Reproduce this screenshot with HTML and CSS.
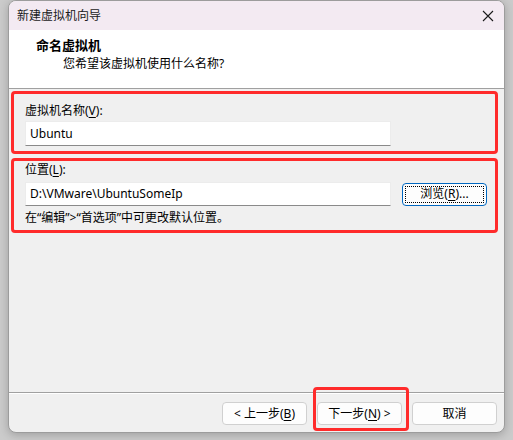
FILE: index.html
```html
<!DOCTYPE html>
<html lang="zh-CN">
<head>
<meta charset="utf-8">
<title>新建虚拟机向导</title>
<link rel="stylesheet" href="styles.css">
</head>
<body>
<div class="win">
  <div class="titlebar">
    <span class="title">新建虚拟机向导</span>
    <svg class="close" width="12" height="12" viewBox="0 0 12 12"><path d="M1 1 L11 11 M11 1 L1 11" stroke="#1a1a1a" stroke-width="1.1" fill="none"/></svg>
  </div>
  <div class="header">
    <div class="h-title">命名虚拟机</div>
    <div class="h-sub">您希望该虚拟机使用什么名称?</div>
  </div>
  <div class="content">
    <div class="box box-name">
      <div class="label">虚拟机名称(<u>V</u>):</div>
      <div class="input">Ubuntu</div>
    </div>
    <div class="box box-loc">
      <div class="label">位置(<u>L</u>):</div>
      <div class="row">
        <div class="input input-loc">D:\VMware\UbuntuSomeIp</div>
        <div class="btn browse"><span class="focus">浏览(<u>R</u>)...</span></div>
      </div>
      <div class="hint">在“编辑”&gt;“首选项”中可更改默认位置。</div>
    </div>
  </div>
  <div class="sep"></div>
  <div class="footer">
    <div class="btn">&lt; 上一步(<u>B</u>)</div>
    <div class="btn">下一步(<u>N</u>) &gt;</div>
    <div class="btn">取消</div>
    <div class="mark"></div>
  </div>
</div>
</body>
</html>
```
FILE: styles.css
```css
* { box-sizing: border-box; }
html, body {
  margin: 0;
  padding: 0;
  background: #cbcbcb;
  width: 513px;
  height: 440px;
  overflow: hidden;
}
body {
  font-family: "Noto Sans", "Noto Sans CJK SC", sans-serif;
  font-size: 12px;
  color: #000;
}
.win {
  position: relative;
  margin-left: 8px;
  width: 497px;
  height: 433px;
  border: 1px solid #9c9c9c;
  border-radius: 8px;
  background: #f0f0f0;
  overflow: hidden;
  box-shadow: 0 2px 10px rgba(0,0,0,0.22);
  display: flex;
  flex-direction: column;
}
.titlebar {
  height: 29px;
  flex: none;
  background: #f3eaf2;
  display: flex;
  align-items: center;
  justify-content: space-between;
  padding: 0 10px 0 8px;
}
.title {
  font-size: 12px;
  line-height: 16px;
  color: #1a1a1a;
  margin-top: 1px;
}
.close { margin-top: 0; }
.header {
  height: 59px;
  flex: none;
  background: #fff;
  border-bottom: 1px solid #a0a0a0;
  padding: 7px 0 0 27px;
}
.h-title {
  font-weight: bold;
  font-size: 13px;
  line-height: 17px;
}
.h-sub {
  margin-top: 2px;
  margin-left: 27px;
  line-height: 16px;
}
.content {
  height: 303px;
  flex: none;
  padding: 2px 6px 0 2px;
  display: flex;
  flex-direction: column;
  gap: 4px;
}
.box {
  border: 3px solid #ff2b2b;
  border-radius: 4px;
  padding-left: 11px;
}
.box-name {
  height: 63px;
  padding-top: 9px;
}
.box-loc {
  height: 75px;
  padding-top: 1px;
}
.label {
  line-height: 16px;
  height: 16px;
}
.input {
  background: #fff;
  border: 1px solid #ececec;
  border-bottom-color: #8a8a8a;
  width: 366px;
  height: 25px;
  line-height: 23px;
  padding-left: 4px;
  font-size: 12px;
}
.box-name .input { margin-top: 2px; }
.row {
  display: flex;
  align-items: center;
  gap: 11px;
  margin-top: 4px;
}
.input-loc { height: 24px; line-height: 22px; }
.hint {
  margin-top: 4px;
  line-height: 16px;
}
.btn {
  width: 85px;
  height: 23px;
  border: 1px solid #d0d0d0;
  border-radius: 4px;
  background: #fdfdfd;
  display: flex;
  align-items: center;
  justify-content: center;
  font-size: 12px;
  line-height: 16px;
}
.browse {
  height: 23px;
  width: 85px;
  border-color: #0067c0;
  padding: 2px;
}
.browse .focus {
  flex: 1;
  align-self: stretch;
  border: 1px dotted #000;
  display: flex;
  align-items: center;
  justify-content: center;
}
.sep {
  height: 1px;
  flex: none;
  background: #a0a0a0;
}
.footer {
  position: relative;
  flex: 1;
  border-top: 1px solid #fff;
  display: flex;
  justify-content: flex-end;
  align-items: flex-start;
  gap: 10px;
  padding: 8px 7px 0 0;
}
.mark {
  position: absolute;
  left: 304px;
  top: -7px;
  width: 96px;
  height: 44px;
  border: 3px solid #ff2b2b;
  border-radius: 4px;
}
u { text-decoration: underline; text-underline-offset: 2px; }
```
